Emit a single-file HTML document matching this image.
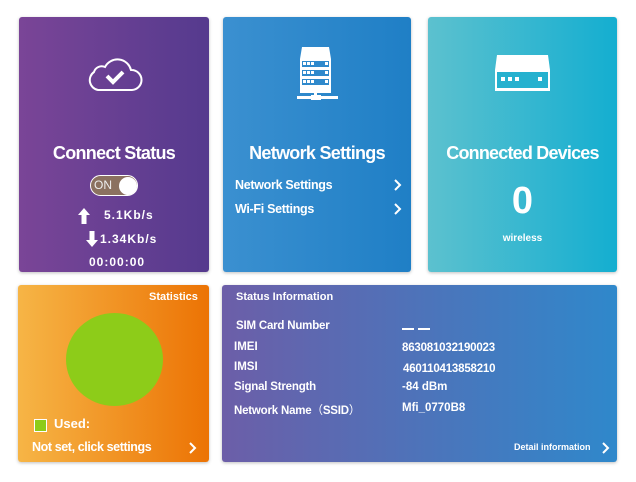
<html><head><style>
body{margin:0;width:636px;height:482px;background:#fff;font-family:"Liberation Sans",sans-serif;color:#fff;position:relative;overflow:hidden}
.c{position:absolute;border-radius:3px;box-shadow:0 1px 3px rgba(0,0,0,.25)}
.a{position:absolute;white-space:nowrap;font-weight:bold}
</style></head><body>
<div class="c" style="left:19px;top:17px;width:190px;height:255px;background:linear-gradient(90deg,#7a4597,#553a8e)"></div>
<div class="c" style="left:223px;top:17px;width:188px;height:255px;background:linear-gradient(90deg,#3b90d0,#1f7fc6)"></div>
<div class="c" style="left:428px;top:17px;width:189px;height:255px;background:linear-gradient(90deg,#5cc1cf,#14aed0)"></div>
<div class="c" style="left:18px;top:285px;width:191px;height:177px;background:linear-gradient(90deg,#f6b546,#ec7304)"></div>
<div class="c" style="left:222px;top:285px;width:395px;height:177px;background:linear-gradient(90deg,#6c5ea8,#2f88cb)"></div>

<svg style="position:absolute;left:86px;top:56px" width="58" height="36" viewBox="0 0 58 36"><path d="M12 34 A10 10 0 0 1 8 16 A8 8 0 0 1 19 11 A14 14 0 0 1 45 14 A10 10 0 0 1 46 34 Z" fill="none" stroke="#fff" stroke-width="2"/><path d="M21 20 L27 26 L37 16" fill="none" stroke="#fff" stroke-width="4"/></svg>
<div class="a" style="left:19px;width:190px;text-align:center;top:143px;font-size:18px;letter-spacing:-.7px">Connect Status</div>
<div style="position:absolute;left:90px;top:175px;width:48px;height:21px;border-radius:11px;background:#8b7160;border:1px solid #fff;box-sizing:border-box"></div>
<div style="position:absolute;left:94px;top:178px;font-size:12px;color:#eee">ON</div>
<div style="position:absolute;left:119px;top:177px;width:18px;height:18px;border-radius:50%;background:#fff"></div>
<svg style="position:absolute;left:78px;top:208px" width="12" height="16"><path d="M6 0 L12 7 L8.5 7 L8.5 16 L3.5 16 L3.5 7 L0 7Z" fill="#fff"/></svg>
<div class="a" style="left:104px;top:208px;font-size:12px;letter-spacing:1px">5.1Kb/s</div>
<svg style="position:absolute;left:86px;top:231px" width="12" height="16"><path d="M6 16 L12 9 L8.5 9 L8.5 0 L3.5 0 L3.5 9 L0 9Z" fill="#fff"/></svg>
<div class="a" style="left:100px;top:232px;font-size:12px;letter-spacing:1px">1.34Kb/s</div>
<div class="a" style="left:89px;top:255px;font-size:12px;letter-spacing:1px">00:00:00</div>

<svg style="position:absolute;left:296px;top:46px" width="42" height="54"><path d="M6 1 H33 L35 13 H4Z" fill="#fff"/><rect x="4" y="13" width="31" height="34" fill="#fff"/><g fill="#2f89cc"><rect x="6" y="15" width="27" height="6"/><rect x="6" y="24" width="27" height="6"/><rect x="6" y="33" width="27" height="6"/></g><g fill="#fff"><rect x="7" y="16" width="3" height="3"/><rect x="11" y="16" width="3" height="3"/><rect x="15" y="16" width="3" height="3"/><rect x="29" y="16" width="3" height="3"/><rect x="7" y="25" width="3" height="3"/><rect x="11" y="25" width="3" height="3"/><rect x="15" y="25" width="3" height="3"/><rect x="29" y="25" width="3" height="3"/><rect x="7" y="34" width="3" height="3"/><rect x="11" y="34" width="3" height="3"/><rect x="15" y="34" width="3" height="3"/><rect x="29" y="34" width="3" height="3"/><rect x="18" y="40" width="3" height="10"/><rect x="1" y="50" width="41" height="3"/><rect x="15" y="49" width="10" height="5"/></g></svg>
<div class="a" style="left:223px;width:188px;text-align:center;top:143px;font-size:18px;letter-spacing:-.7px">Network Settings</div>
<div class="a" style="left:235px;top:178px;font-size:12.5px;letter-spacing:-.3px">Network Settings</div>
<div class="a" style="left:235px;top:202px;font-size:12.5px;letter-spacing:-.3px">Wi-Fi Settings</div>
<svg style="position:absolute;left:393px;top:179px" width="10" height="40"><path d="M2 1 L7 6 L2 11 M2 25 L7 30 L2 35" fill="none" stroke="#fff" stroke-width="2"/></svg>

<svg style="position:absolute;left:494px;top:54px" width="58" height="39"><path d="M3 1 H54 L56 16 V37 H1 V16Z" fill="#fff"/><rect x="3" y="18" width="51" height="16" fill="#25b1cf"/><g fill="#fff"><rect x="7" y="23" width="4" height="4"/><rect x="14" y="23" width="4" height="4"/><rect x="21" y="23" width="4" height="4"/><rect x="44" y="23" width="4" height="4"/></g></svg>
<div class="a" style="left:428px;width:189px;text-align:center;top:143px;font-size:18px;letter-spacing:-.8px">Connected Devices</div>
<div class="a" style="left:428px;width:189px;text-align:center;top:180px;font-size:38px">0</div>
<div class="a" style="left:428px;width:189px;text-align:center;top:233px;font-size:10px">wireless</div>

<div class="a" style="left:149px;top:291px;font-size:11px">Statistics</div>
<div style="position:absolute;left:66px;top:313px;width:97px;height:93px;border-radius:50%;background:#8dcc19"></div>
<div style="position:absolute;left:34px;top:419px;width:11px;height:11px;background:#8dcc19;border:1px solid #fff"></div>
<div class="a" style="left:54px;top:416px;font-size:13px">Used:</div>
<div class="a" style="left:32px;top:440px;font-size:12.5px;letter-spacing:-.4px">Not set, click settings</div>
<svg style="position:absolute;left:188px;top:442px" width="10" height="14"><path d="M2 1 L7 6 L2 11" fill="none" stroke="#fff" stroke-width="2"/></svg>

<div class="a" style="left:236px;top:291px;font-size:11px">Status Information</div>
<div class="a" style="left:236px;top:320px;font-size:11.5px;letter-spacing:-.2px">SIM Card Number</div>
<div style="position:absolute;left:402px;top:328px;width:12px;height:2px;background:#fff"></div>
<div style="position:absolute;left:418px;top:328px;width:12px;height:2px;background:#fff"></div>
<div class="a" style="left:234px;top:341px;font-size:11.5px">IMEI</div>
<div class="a" style="left:402px;top:342px;font-size:11.5px;letter-spacing:-.2px">863081032190023</div>
<div class="a" style="left:234px;top:361px;font-size:11.5px">IMSI</div>
<div class="a" style="left:403px;top:363px;font-size:11.5px;letter-spacing:-.2px">460110413858210</div>
<div class="a" style="left:234px;top:381px;font-size:11.5px;letter-spacing:-.2px">Signal Strength</div>
<div class="a" style="left:402px;top:381px;font-size:11.5px">-84 dBm</div>
<div class="a" style="left:234px;top:402px;font-size:11.5px;letter-spacing:-.2px">Network Name<span style="font-family:'Noto Sans CJK SC',sans-serif;font-weight:normal">（</span>SSID<span style="font-family:'Noto Sans CJK SC',sans-serif;font-weight:normal">）</span></div>
<div class="a" style="left:402px;top:402px;font-size:11.5px">Mfi_0770B8</div>
<div class="a" style="left:514px;top:442px;font-size:9px">Detail information</div>
<svg style="position:absolute;left:601px;top:442px" width="10" height="14"><path d="M2 1 L7 6 L2 11" fill="none" stroke="#fff" stroke-width="2"/></svg>
</body></html>
